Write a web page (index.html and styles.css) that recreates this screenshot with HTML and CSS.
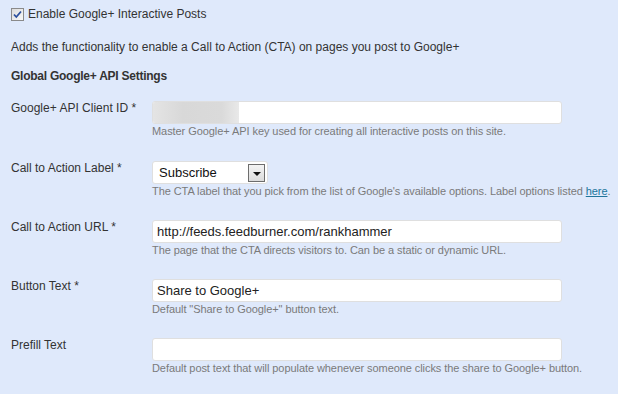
FILE: index.html
```html
<!DOCTYPE html>
<html lang="en">
<head>
  <meta charset="UTF-8">
  <title>Google+ Interactive Posts</title>
  <link rel="stylesheet" href="styles.css">
</head>
<body>
  <div class="settings">
    <!-- Master toggle -->
    <label class="enable-row">
      <span class="checkbox">
        <svg width="11" height="11" viewBox="0 0 11 11">
          <path d="M2 5.5 L4.3 8 L9 2.5" fill="none" stroke="#2b4f9e" stroke-width="1.8"/>
        </svg>
      </span>
      <span>Enable Google+ Interactive Posts</span>
    </label>

    <p class="intro">Adds the functionality to enable a Call to Action (CTA) on pages you post to Google+</p>

    <h3>Global Google+ API Settings</h3>

    <div class="field-row first">
      <label class="field-label">Google+ API Client ID *</label>
      <div class="field">
        <div class="text-box"><span class="blurred"></span></div>
        <p class="desc">Master Google+ API key used for creating all interactive posts on this site.</p>
      </div>
    </div>

    <div class="field-row">
      <label class="field-label">Call to Action Label *</label>
      <div class="field">
        <div class="select-box">
          <span>Subscribe</span>
          <span class="arrow"></span>
        </div>
        <p class="desc">The CTA label that you pick from the list of Google's available options. Label options listed <a href="#">here</a>.</p>
      </div>
    </div>

    <div class="field-row">
      <label class="field-label">Call to Action URL *</label>
      <div class="field">
        <div class="text-box">http://feeds.feedburner.com/rankhammer</div>
        <p class="desc">The page that the CTA directs visitors to. Can be a static or dynamic URL.</p>
      </div>
    </div>

    <div class="field-row">
      <label class="field-label">Button Text *</label>
      <div class="field">
        <div class="text-box">Share to Google+</div>
        <p class="desc">Default "Share to Google+" button text.</p>
      </div>
    </div>

    <div class="field-row">
      <label class="field-label">Prefill Text</label>
      <div class="field">
        <div class="text-box"></div>
        <p class="desc">Default post text that will populate whenever someone clicks the share to Google+ button.</p>
      </div>
    </div>
  </div>
</body>
</html>
```

FILE: styles.css
```css
* {
  box-sizing: border-box;
  margin: 0;
  padding: 0;
}
body {
  font-family: "Liberation Sans", Arial, sans-serif;
  font-size: 12px;
  color: #333;
  background-color: #dfe9fb;
}

.settings {
  padding: 7px 11px;
}

/* Top checkbox, old-style grey box with blue tick */
.enable-row {
  display: flex;
  align-items: center;
  gap: 4px;
  height: 14px;
}
.checkbox {
  display: flex;
  align-items: center;
  justify-content: center;
  width: 13px;
  height: 13px;
  border: 1px solid #8a8a8a;
  background: linear-gradient(135deg, #dcdcdc, #f8f8f8);
}

.intro {
  margin-top: 18px;
  line-height: 16px;
}

h3 {
  margin-top: 13px;
  font-size: 12px;
  line-height: 16px;
  font-weight: bold;
  letter-spacing: -0.25px;
}

/* Form rows: label column + field column */
.field-row {
  display: grid;
  grid-template-columns: 141px 1fr;
  margin-bottom: 22px;
}
.field-row.first {
  margin-top: 17px;
  margin-bottom: 23px;
}
.field-label {
  line-height: 14px;
}

.text-box {
  width: 410px;
  height: 23px;
  padding: 0 4px;
  background: #fff;
  border: 1px solid #dfdfdf;
  border-radius: 3px;
  font-size: 13px;
  line-height: 21px;
  color: #222;
}
.blurred {
  display: block;
  width: 86px;
  height: 21px;
  margin-left: -4px;
  background: linear-gradient(90deg, #e4e4e4, #d8d8d8 35%, #dadada 80%, #e9e9e9);
  border-radius: 2px 0 0 2px;
}

.select-box {
  display: flex;
  align-items: center;
  justify-content: space-between;
  width: 116px;
  height: 23px;
  padding: 0 2px 0 6px;
  background: #fff;
  border: 1px solid #dfdfdf;
  border-radius: 3px;
  font-size: 13px;
  color: #111;
}
.arrow {
  position: relative;
  width: 17px;
  height: 18px;
  border: 1px solid #6d6d6d;
  background: linear-gradient(#f4f4f4, #dcdcdc);
}
.arrow::after {
  content: "";
  position: absolute;
  left: 4px;
  top: 7px;
  border-left: 4px solid transparent;
  border-right: 4px solid transparent;
  border-top: 4px solid #111;
}

.desc {
  font-size: 11px;
  line-height: 14px;
  color: #7a7a7a;
  white-space: nowrap;
  letter-spacing: -0.07px;
}
.desc a {
  color: #21759b;
}
```
